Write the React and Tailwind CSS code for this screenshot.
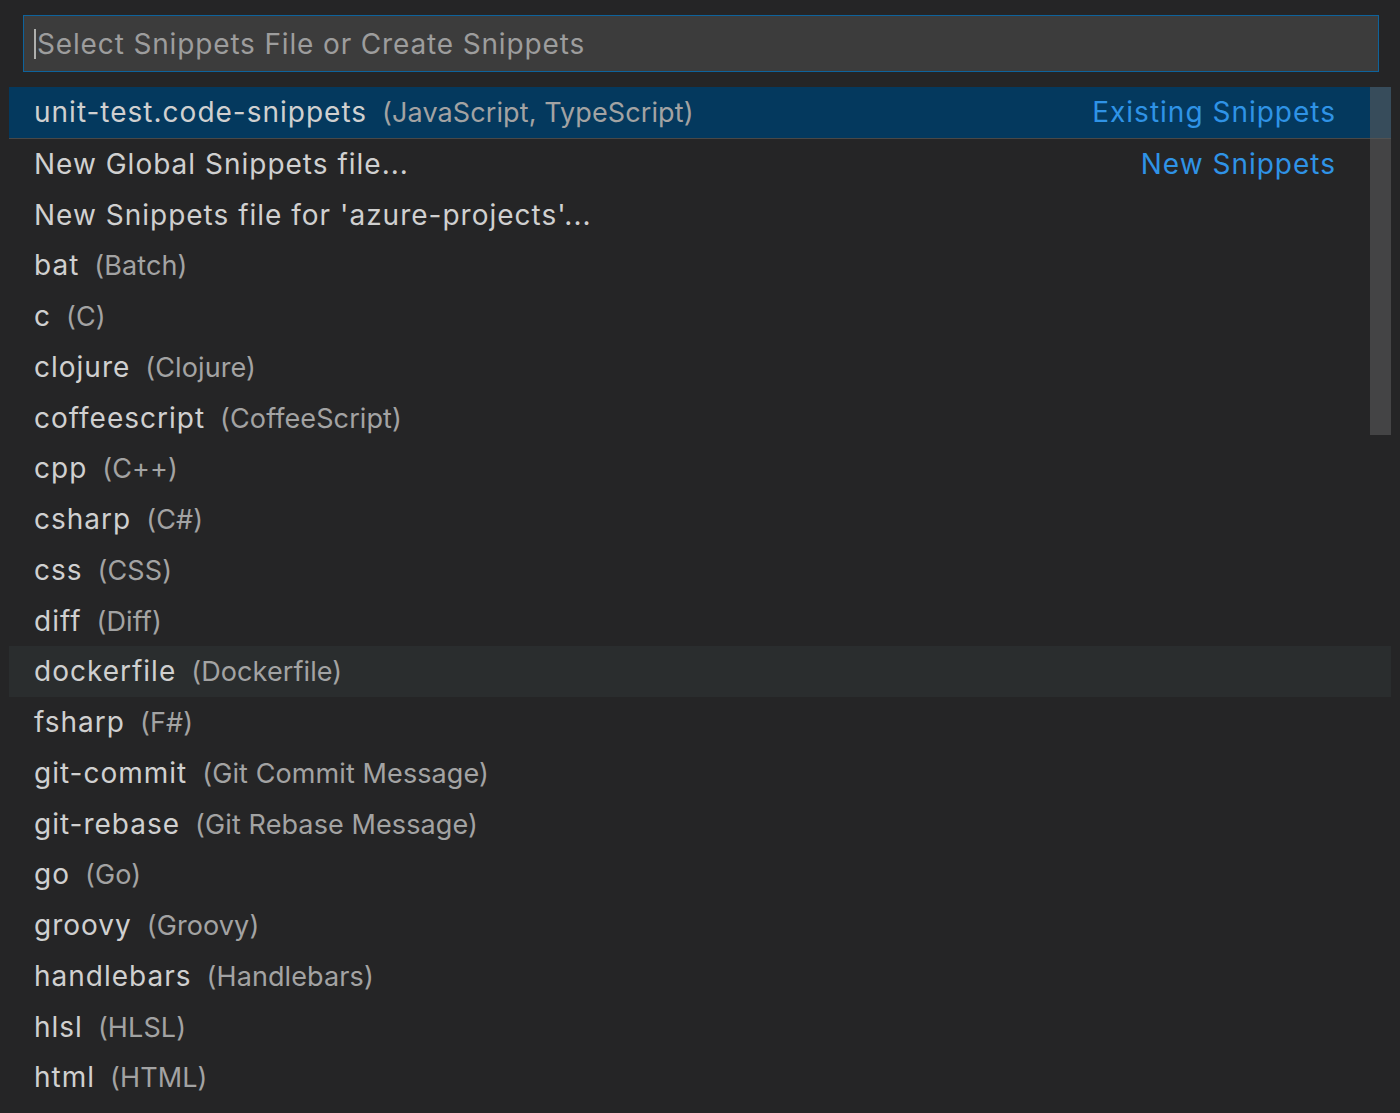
import React from "react";

const items = [
  ["bat", "Batch"],
  ["c", "C"],
  ["clojure", "Clojure"],
  ["coffeescript", "CoffeeScript"],
  ["cpp", "C++"],
  ["csharp", "C#"],
  ["css", "CSS"],
  ["diff", "Diff"],
  ["dockerfile", "Dockerfile"],
  ["fsharp", "F#"],
  ["git-commit", "Git Commit Message"],
  ["git-rebase", "Git Rebase Message"],
  ["go", "Go"],
  ["groovy", "Groovy"],
  ["handlebars", "Handlebars"],
  ["hlsl", "HLSL"],
  ["html", "HTML"],
];

function Row({ label, desc, right, className = "" }) {
  return (
    <div className={`h-[50.75px] flex items-center pl-[25px] pr-[55px] ${className}`}>
      <div className="flex-1 flex items-baseline">
        <span className="text-[28px] tracking-[1px] text-[#d0d0d0] whitespace-pre">{label}</span>
        {desc && <span className="ml-[15px] text-[27px] tracking-[0.1px] text-[#a3a3a3]">({desc})</span>}
        <span className="flex-1" />
        {right && <span className="text-[28px] tracking-[1px] text-[#2f93e6]">{right}</span>}
      </div>
    </div>
  );
}

export default function App() {
  return (
    <div
      className="w-[1400px] h-[1113px] bg-[#252526] overflow-hidden relative"
      style={{ fontFamily: "Inter, 'Noto Sans', sans-serif" }}
    >
      <div className="pt-[15px] pl-[23px] pr-[21px]">
        <div className="h-[57px] bg-[#3c3c3c] border border-[#0e639c] flex items-center pl-[10px]">
          <span className="w-[2px] h-[30px] bg-[#aeafad] mr-[1px]" />
          <span className="text-[28px] tracking-[0.85px] text-[#9d9d9d]">Select Snippets File or Create Snippets</span>
        </div>
      </div>
      <div className="mt-[15px] ml-[9px] mr-[9px] relative">
        <Row
          label="unit-test.code-snippets"
          desc="JavaScript, TypeScript"
          right="Existing Snippets"
          className="bg-[#04395e]"
        />
        <div className="border-t border-[#484848]">
          <Row label="New Global Snippets file..." right="New Snippets" className="h-[49.75px]" />
        </div>
        <Row label="New Snippets file for 'azure-projects'..." />
        {items.map(([l, d]) => (
          <Row
            key={l}
            label={l}
            desc={d}
            className={l === "dockerfile" ? "bg-[#2a2d2e]" : ""}
          />
        ))}
        <div className="absolute top-0 right-0 w-[21px] h-[348px] bg-[#5a5a5a]/60" />
      </div>
    </div>
  );
}
